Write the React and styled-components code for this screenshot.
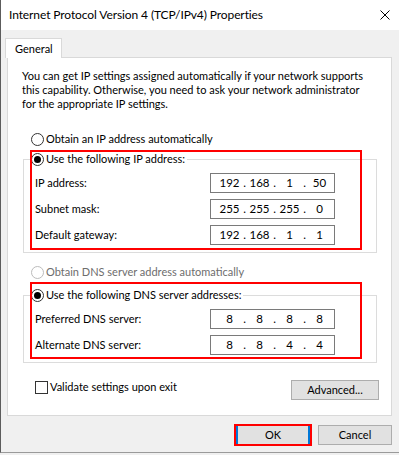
import React from "react";
import styled, { createGlobalStyle } from "styled-components";

const GlobalStyle = createGlobalStyle`
  html, body { margin: 0; padding: 0; background: #f0f0f0; }
  body {
    font-family: Lato, "Liberation Sans", Arial, sans-serif;
    font-size: 11px;
    color: #000000;
  }
  * { box-sizing: border-box; }
`;

const Window = styled.div`
  width: 399px;
  height: 453px;
  overflow: hidden;
  display: flex;
  flex-direction: column;
  background: #f0f0f0;
  border-left: 1px solid #5c5c5c;
  border-bottom: 1px solid #9a9a9a;
`;

const TitleBar = styled.div`
  height: 30px;
  flex: none;
  background: #ffffff;
  display: flex;
  align-items: center;
  justify-content: space-between;
  padding: 0 9px 1px 8px;
`;

const Title = styled.span`
  font-size: 12px;
  letter-spacing: -0.1px;
  color: #000;
  white-space: nowrap;
`;

const CloseIcon = styled.svg`
  width: 10px;
  height: 10px;
  display: block;
`;

const Body = styled.div`
  flex: 1;
  display: flex;
  flex-direction: column;
  padding: 8px 7px 0 6px;
`;

const TabStrip = styled.div`
  display: flex;
  height: 19px;
  align-items: flex-end;
`;

const Tab = styled.div`
  position: relative;
  z-index: 1;
  height: 20px;
  margin: 0 0 -1px -2px;
  padding: 2px 8px 0 9px;
  background: #ffffff;
  border: 1px solid #d9d9d9;
  border-bottom: none;
  line-height: 16px;
`;

const Panel = styled.div`
  height: 359px;
  flex: none;
  background: #ffffff;
  border: 1px solid #d9d9d9;
  padding: 11px 13px 0 14px;
  display: flex;
  flex-direction: column;
`;

const Description = styled.p`
  margin: 0;
  line-height: 14px;
  white-space: nowrap;
`;

const OptionRow = styled.label`
  display: flex;
  align-items: center;
  gap: 2px;
  height: 14px;
  line-height: 14px;
  margin-left: ${(p) => p.$indent || 0}px;
  margin-top: ${(p) => p.$top || 0}px;
  color: ${(p) => (p.$disabled ? "#6d6d6d" : "#000")};
  white-space: nowrap;
`;

const Radio = styled.span`
  width: 13px;
  height: 13px;
  flex: none;
  border-radius: 50%;
  border: 1px solid ${(p) => (p.$disabled ? "#bcbcbc" : "#333333")};
  background: #ffffff;
  display: flex;
  align-items: center;
  justify-content: center;
  &::after {
    content: "";
    width: 7px;
    height: 7px;
    border-radius: 50%;
    background: ${(p) => (p.$checked ? "#000" : "transparent")};
  }
`;

const Checkbox = styled.span`
  width: 13px;
  height: 13px;
  flex: none;
  border: 1px solid #333333;
  background: #ffffff;
`;

const GroupWrap = styled.div`
  position: relative;
  margin: ${(p) => p.$top || 0}px 1px 0 1px;
`;

const Group = styled.fieldset`
  margin: 0;
  min-width: 0;
  border: 1px solid #dcdcdc;
  padding: 7px 41px 7px 11px;
`;

const Legend = styled.legend`
  padding: 0 2px 0 0;
  margin-left: -4px;
  background: #fff;
`;

const Fields = styled.div`
  display: grid;
  grid-template-columns: 1fr 125px;
  row-gap: 6px;
  align-items: center;
`;

const FieldLabel = styled.span`
  line-height: 20px;
`;

const IpBox = styled.div`
  height: 20px;
  border: 1px solid #7a7a7a;
  background: #fff;
  display: flex;
  align-items: center;
  padding-left: 6px;
  line-height: 18px;
  font-size: 11.5px;
`;

const Octet = styled.span`
  width: 25px;
  text-align: center;
`;

const Dot = styled.span`
  width: 5px;
  text-align: center;
`;

const Highlight = styled.div`
  position: absolute;
  border: 2px solid #ff0000;
  pointer-events: none;
  top: ${(p) => p.$top}px;
  bottom: ${(p) => p.$bottom}px;
  left: ${(p) => p.$left}px;
  width: ${(p) => p.$width}px;
`;

const BottomRow = styled.div`
  display: flex;
  justify-content: space-between;
  align-items: flex-start;
  margin-top: 17px;
  margin-right: -1px;
`;

const Button = styled.button`
  font: inherit;
  color: #000;
  width: ${(p) => p.$width || 74}px;
  height: 20px;
  padding: 0;
  background: #e1e1e1;
  border: 1px solid ${(p) => (p.$default ? "#0078d7" : "#adadad")};
  border-width: ${(p) => (p.$default ? "1px 2px" : "1px")};
  border-radius: 0;
  line-height: 18px;
`;

const Footer = styled.div`
  display: flex;
  justify-content: flex-end;
  gap: 8px;
  margin-top: 9px;
`;

const OkWrap = styled.div`
  position: relative;
  display: flex;
`;

const OkHighlight = styled.div`
  position: absolute;
  inset: -1px -2px -1px -2px;
  border: 2px solid #ff0000;
  pointer-events: none;
`;

function IpField({ value }) {
  const parts = value.split(".");
  return (
    <IpBox>
      {parts.map((p, i) => (
        <React.Fragment key={i}>
          <Octet>{p}</Octet>
          {i < 3 && <Dot>.</Dot>}
        </React.Fragment>
      ))}
    </IpBox>
  );
}

export default function App() {
  return (
    <>
      <GlobalStyle />
      <Window>
        <TitleBar>
          <Title>Internet Protocol Version 4 (TCP/IPv4) Properties</Title>
          <CloseIcon viewBox="0 0 10 10">
            <path d="M0.5 0.5 L9.5 9.5 M9.5 0.5 L0.5 9.5" stroke="#000" strokeWidth="1" fill="none" />
          </CloseIcon>
        </TitleBar>
        <Body>
          <TabStrip>
            <Tab>General</Tab>
          </TabStrip>
          <Panel>
            <Description>
              You can get IP settings assigned automatically if your network supports
              <br />
              this capability. Otherwise, you need to ask your network administrator
              <br />
              for the appropriate IP settings.
            </Description>

            <OptionRow $indent={9} $top={21}>
              <Radio />
              Obtain an IP address automatically
            </OptionRow>

            <GroupWrap $top={6}>
              <Group>
                <Legend>
                  <OptionRow>
                    <Radio $checked />
                    Use the following IP address:
                  </OptionRow>
                </Legend>
                <Fields>
                  <FieldLabel>IP address:</FieldLabel>
                  <IpField value="192.168.1.50" />
                  <FieldLabel>Subnet mask:</FieldLabel>
                  <IpField value="255.255.255.0" />
                  <FieldLabel>Default gateway:</FieldLabel>
                  <IpField value="192.168.1.1" />
                </Fields>
              </Group>
              <Highlight $top={-2} $bottom={3} $left={7} $width={332} />
            </GroupWrap>

            <OptionRow $indent={9} $top={12} $disabled>
              <Radio $disabled />
              Obtain DNS server address automatically
            </OptionRow>

            <GroupWrap $top={9}>
              <Group>
                <Legend>
                  <OptionRow>
                    <Radio $checked />
                    Use the following DNS server addresses:
                  </OptionRow>
                </Legend>
                <Fields>
                  <FieldLabel>Preferred DNS server:</FieldLabel>
                  <IpField value="8.8.8.8" />
                  <FieldLabel>Alternate DNS server:</FieldLabel>
                  <IpField value="8.8.4.4" />
                </Fields>
              </Group>
              <Highlight $top={-6} $bottom={4} $left={7} $width={332} />
            </GroupWrap>

            <BottomRow>
              <OptionRow $indent={13} $top={0}>
                <Checkbox />
                Validate settings upon exit
              </OptionRow>
              <Button $width={88}>Advanced...</Button>
            </BottomRow>
          </Panel>
          <Footer>
            <OkWrap>
              <Button $default>OK</Button>
              <OkHighlight />
            </OkWrap>
            <Button>Cancel</Button>
          </Footer>
        </Body>
      </Window>
    </>
  );
}
